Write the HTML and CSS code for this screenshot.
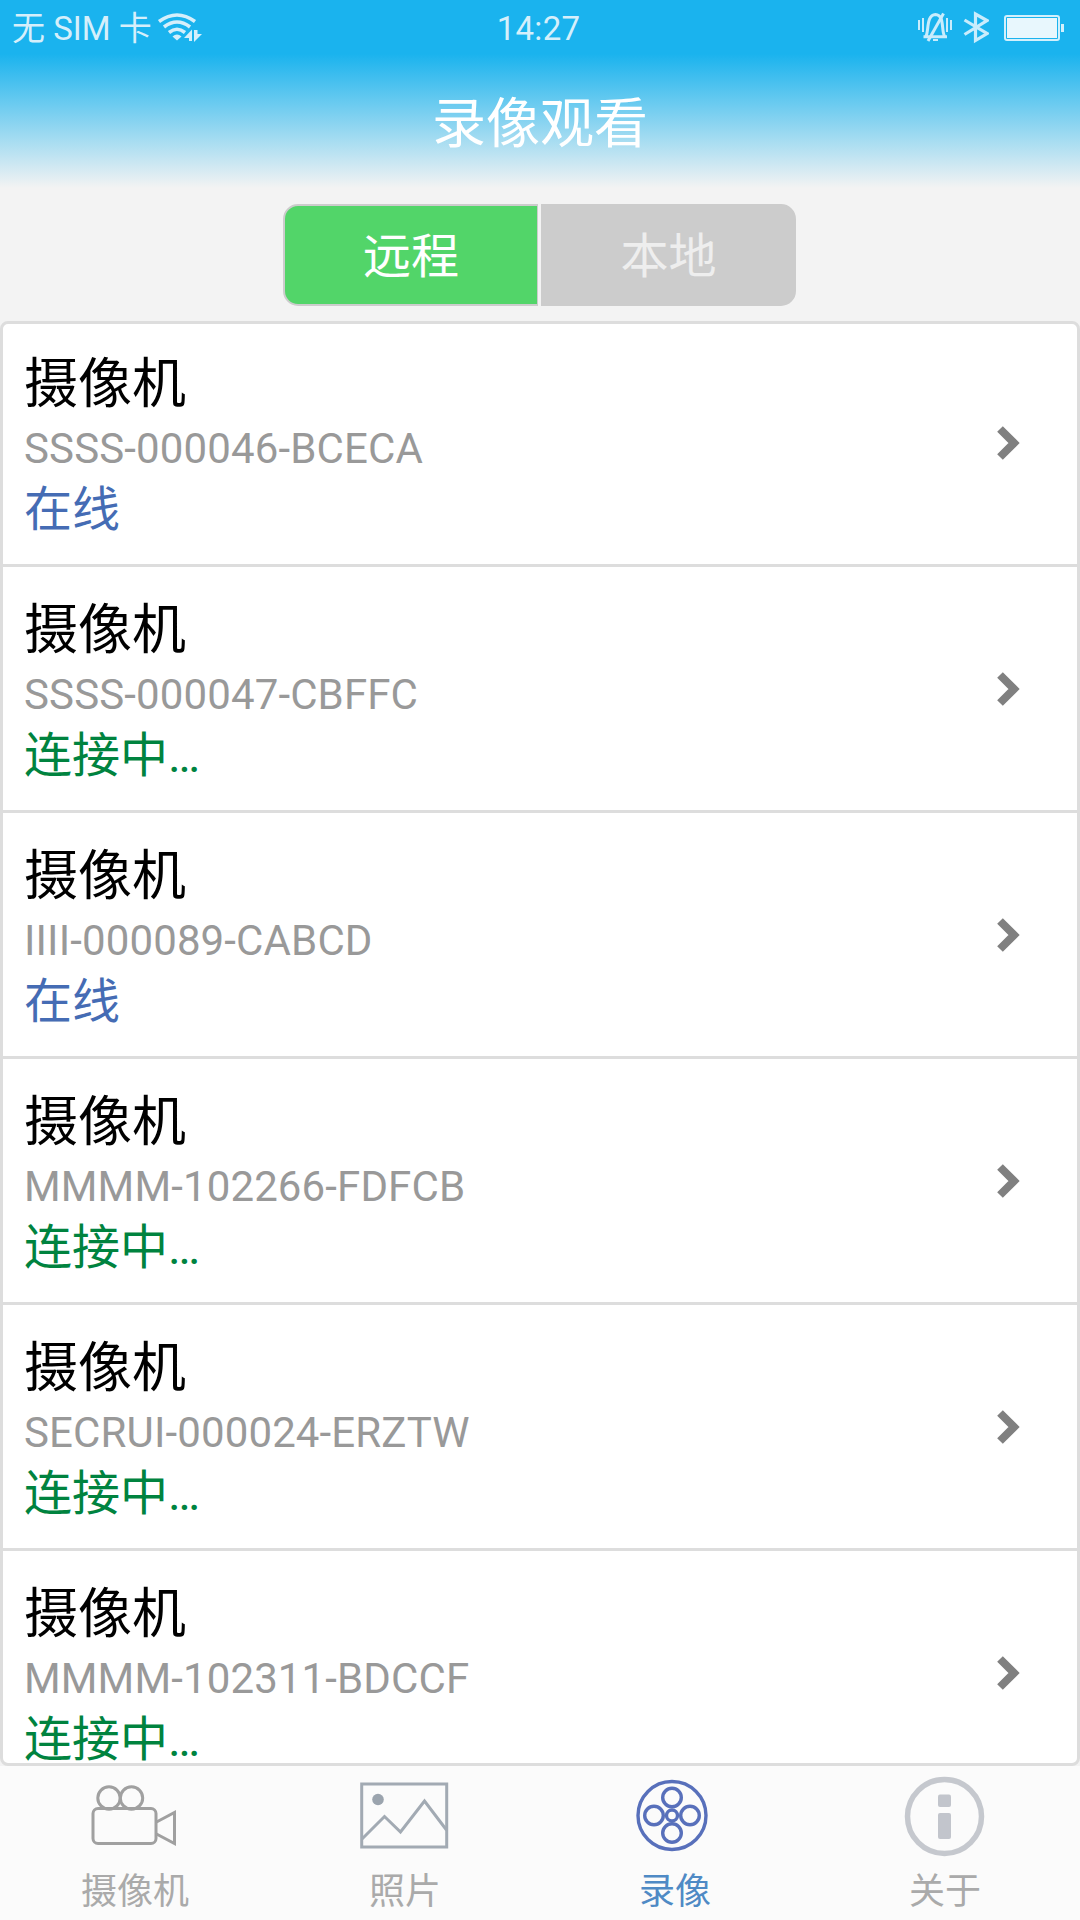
FILE: index.html
```
<!DOCTYPE html>
<html lang="zh-CN">
<head>
  <meta charset="UTF-8">
  <meta name="viewport" content="width=device-width, initial-scale=1.0">
  <title>录像观看</title>
  <link rel="stylesheet" href="styles.css">
</head>
<body>
  <header>
    <div class="status-bar">
      <div class="status-left">
        <span>无 SIM 卡</span>
        <svg class="wifi" width="46" height="32" viewBox="157 12 46 32">
          <g fill="none" stroke="#d5effb" stroke-width="3.6">
            <path d="M159 21.5Q177 8.5 195 21.5"/>
            <path d="M164 27Q177 17 190 27"/>
            <path d="M169 32.5Q177 26 185 32.5"/>
          </g>
          <path d="M172.5 36.5Q177 32.5 181.5 36.5L177 40.5Z" fill="#d5effb"/>
          <path d="M192 29.5V41H189V38H184ZM194 30V42L202 34H197.5V30Z" fill="#d5effb"/>
        </svg>
      </div>
      <div class="status-time">14:27</div>
      <div class="status-right">
        <svg width="36" height="32" viewBox="917 12 36 32" fill="none" stroke="#c9ecfc" stroke-width="2.5">
          <path d="M923.5 36.8H947M926 36C929 31 926 15 935.5 14.5C945 15 941 31 944.5 36" stroke-width="3"/>
          <path d="M943.5 13.5L928 41" stroke-width="3"/>
          <path d="M919 20V30M923 18V32M947 18V32M951 20V30" stroke-width="2"/>
          <path d="M933 40H938" stroke-width="2"/>
        </svg>
        <svg width="26" height="34" viewBox="963 11 26 34" fill="none" stroke="#c9ecfc" stroke-width="3.2">
          <path d="M964.5 20L987 33.5L975.5 40.5V14L987 20.5L964.5 34.5"/>
        </svg>
        <svg width="62" height="28" viewBox="1003 13 62 28">
          <rect x="1005" y="15" width="54" height="24" rx="2" fill="none" stroke="#d3f0fc" stroke-width="2"/>
          <rect x="1007" y="17" width="50" height="20" fill="#e8f7fd"/>
          <rect x="1061" y="23" width="3" height="8" fill="#d3f0fc"/>
        </svg>
      </div>
    </div>
    <h1>录像观看</h1>
  </header>

  <div class="segment">
    <button class="seg-btn active">远程</button>
    <button class="seg-btn">本地</button>
  </div>

  <ul class="list" id="list"></ul>

  <nav class="tabs">
    <a class="tab">
      <svg width="90" height="84" viewBox="90 1775 90 84" fill="none" stroke="#a0a0a0" stroke-width="3">
        <circle cx="109" cy="1798" r="11.2"/>
        <circle cx="131.5" cy="1798" r="11.2"/>
        <rect x="93" y="1808.5" width="63" height="35" rx="5"/>
        <path d="M156.500 1822L174.500 1812.500V1843.500L156.500 1834"/>
      </svg>
      <span>摄像机</span>
    </a>
    <a class="tab">
      <svg width="90" height="84" viewBox="360 1775 90 84" fill="none" stroke="#a2aab3" stroke-width="3">
        <rect x="361.7" y="1784" width="85" height="63"/>
        <path d="M362 1839L384.5 1816.5L400.5 1832L424.5 1801L446.5 1830"/>
        <circle cx="378" cy="1799.5" r="5.8" fill="#9ba4ae" stroke="none"/>
      </svg>
      <span>照片</span>
    </a>
    <a class="tab active">
      <svg width="90" height="84" viewBox="630 1775 90 84" fill="none" stroke="#5870bb" stroke-width="3.4">
        <circle cx="672" cy="1815.5" r="34"/>
        <circle cx="672" cy="1797.5" r="9.3"/>
        <circle cx="672" cy="1833" r="9.3"/>
        <circle cx="654" cy="1815.5" r="9.3"/>
        <circle cx="690" cy="1815.5" r="9.3"/>
        <circle cx="672" cy="1815.5" r="5.5"/>
      </svg>
      <span>录像</span>
    </a>
    <a class="tab">
      <svg width="90" height="84" viewBox="900 1775 90 84">
        <circle cx="944.5" cy="1816.5" r="37" fill="none" stroke="#c5c8ce" stroke-width="5.5"/>
        <rect x="938" y="1794.5" width="13" height="12.5" rx="2" fill="#c2c5cc"/>
        <rect x="938" y="1813" width="13" height="26" rx="2" fill="#c2c5cc"/>
      </svg>
      <span>关于</span>
    </a>
  </nav>

  <script>
    const cameras = [
      { id: 'SSSS-000046-BCECA', online: true },
      { id: 'SSSS-000047-CBFFC', online: false },
      { id: 'IIII-000089-CABCD', online: true },
      { id: 'MMMM-102266-FDFCB', online: false },
      { id: 'SECRUI-000024-ERZTW', online: false },
      { id: 'MMMM-102311-BDCCF', online: false }
    ];

    const list = document.getElementById('list');

    cameras.forEach(camera => {
      const item = document.createElement('li');
      item.classList.add('item');
      item.innerHTML = `
        <div class="info">
          <div class="name">摄像机</div>
          <div class="uid">${camera.id}</div>
          <div class="state ${camera.online ? 'online' : 'connecting'}">${camera.online ? '在线' : '连接中…'}</div>
        </div>
        <svg class="arrow" width="28" height="40" viewBox="0 0 28 40">
          <path d="M5 6L19 20L5 34" fill="none" stroke="#808080" stroke-width="8"/>
        </svg>`;
      list.appendChild(item);
    });
  </script>
</body>
</html>
```
FILE: styles.css
```
* {
  box-sizing: border-box;
}

body {
  margin: 0;
  width: 1080px;
  height: 1920px;
  display: flex;
  flex-direction: column;
  overflow: hidden;
  background: #f3f3f3;
  font-family: Roboto, "Noto Sans CJK SC", sans-serif;
}

/* Header */
header {
  height: 204px;
  background: linear-gradient(#1ab3ee 54px, #f3f3f3 188px);
  color: #fff;
}

.status-bar {
  height: 54px;
  padding: 0 15px 0 12px;
  display: grid;
  grid-template-columns: 1fr auto 1fr;
  align-items: center;
  font-size: 33px;
  line-height: 52px;
  color: #d5effb;
}

.status-bar span,
.status-time {
  padding-top: 3px;
}

.status-time {
  letter-spacing: 0.3px;
}

.status-left {
  display: flex;
  align-items: center;
  gap: 5px;
}

.status-right {
  display: flex;
  justify-content: flex-end;
  align-items: center;
  gap: 10px;
}

.status-right svg:last-child {
  margin-left: 4px;
}

h1 {
  margin: 0;
  padding-top: 31px;
  font-size: 54px;
  font-weight: 400;
  line-height: 80px;
  text-align: center;
}

/* Remote / local switch */
.segment {
  display: flex;
  justify-content: center;
  gap: 3px;
  height: 117px;
  padding-right: 2px;
}

.seg-btn {
  width: 255px;
  height: 102px;
  padding: 3px 0 0 1px;
  border: 2px solid #ccc;
  border-radius: 0 15px 15px 0;
  background: #ccc;
  color: #eee;
  font-family: inherit;
  font-size: 48px;
  line-height: 95px;
}

.seg-btn.active {
  border-right-width: 1px;
  border-radius: 15px 0 0 15px;
  background: #52d569;
  color: #fff;
}

/* Camera list */
.list {
  flex: 1;
  min-height: 0;
  margin: 0;
  padding: 0;
  list-style: none;
  overflow: hidden;
  background: #fff;
  border: 3px solid #ddd;
  border-radius: 8px;
}

.item {
  display: flex;
  justify-content: space-between;
  align-items: center;
  height: 246px;
  padding: 0 54px 0 21px;
  border-bottom: 3px solid #ddd;
}

.item:first-child {
  margin-top: -3px;
}

.info {
  align-self: flex-start;
  padding-top: 32px;
}

.name {
  font-size: 54px;
  line-height: 64px;
  color: #000;
}

.uid {
  margin-top: 7px;
  font-size: 42px;
  line-height: 50px;
  letter-spacing: 0.13px;
  color: #999;
}

.state {
  margin-top: 8px;
  font-size: 48px;
  line-height: 56px;
}

.online {
  color: #456cb4;
}

.connecting {
  color: #00833f;
}

/* Bottom tabs */
.tabs {
  display: grid;
  grid-template-columns: repeat(4, 1fr);
  height: 154px;
  background: #fbfbfb;
}

.tab {
  display: flex;
  flex-direction: column;
  align-items: center;
  padding-top: 9px;
  font-size: 36px;
  line-height: 48px;
  color: #aaa;
}

.tab span {
  margin-top: 9px;
}

.tab.active {
  color: #4f8ac5;
}
```
